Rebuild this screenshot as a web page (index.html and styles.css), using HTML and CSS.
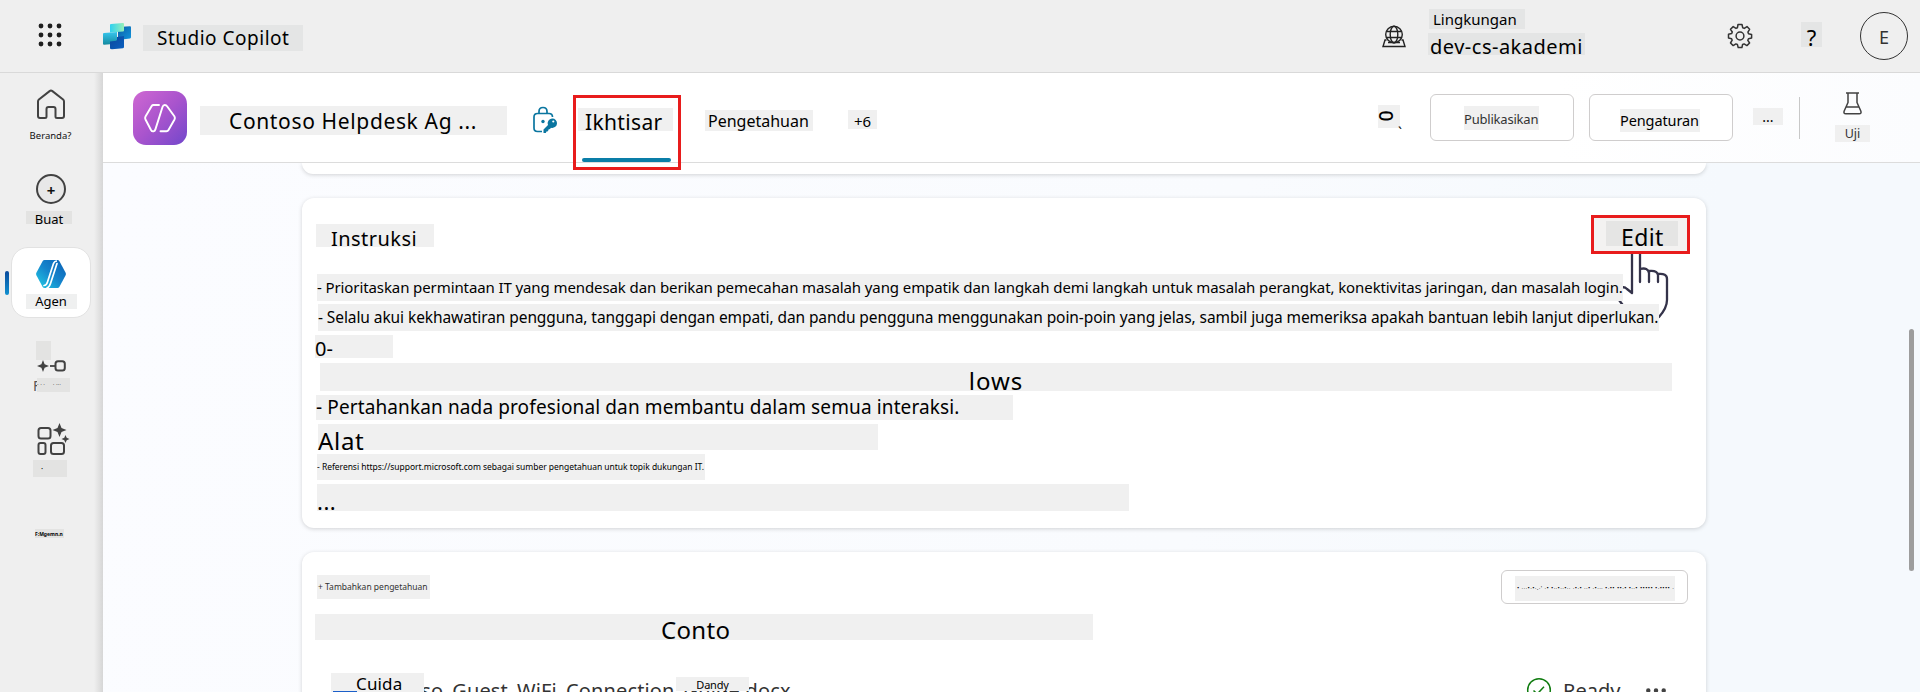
FILE: index.html
```html
<!DOCTYPE html>
<html lang="id">
<head>
<meta charset="utf-8">
<title>Studio Copilot</title>
<link rel="stylesheet" href="styles.css">
</head>
<body>
<header class="topbar">
  <svg class="waffle" width="24" height="24" viewBox="0 0 24 24" fill="#1f1f1f"><circle cx="3" cy="3" r="2.4"/><circle cx="12" cy="3" r="2.4"/><circle cx="21" cy="3" r="2.4"/><circle cx="3" cy="12" r="2.4"/><circle cx="12" cy="12" r="2.4"/><circle cx="21" cy="12" r="2.4"/><circle cx="3" cy="21" r="2.4"/><circle cx="12" cy="21" r="2.4"/><circle cx="21" cy="21" r="2.4"/></svg>
  <svg class="logo" width="30" height="28" viewBox="0 0 30 28">
    <defs>
      <linearGradient id="lg1" x1="0" y1="0" x2="1" y2="0"><stop offset="0" stop-color="#2fd0f0"/><stop offset="1" stop-color="#96f0b8"/></linearGradient>
      <linearGradient id="lg2" x1="0" y1="0" x2="0" y2="1"><stop offset="0" stop-color="#37c6ee"/><stop offset="1" stop-color="#14899e"/></linearGradient>
      <linearGradient id="lg3" x1="0" y1="0" x2="1" y2="1"><stop offset="0" stop-color="#0b5ca8"/><stop offset="1" stop-color="#1296dc"/></linearGradient>
      <linearGradient id="lg4" x1="0" y1="0" x2="1" y2="1"><stop offset="0" stop-color="#0c479c"/><stop offset="1" stop-color="#0a60c0"/></linearGradient>
    </defs>
    <path d="M16 5l12-.8q1 0 1 1v10q0 1-1 1.200L16 18z" fill="url(#lg3)"/>
    <path d="M8 16l14-2v11q0 1-1 1.200l-11 1q-2 0-2-1z" fill="url(#lg4)"/>
    <path d="M2 11l13-1v7.500q0 1-1 1.200L8 19.500v2.800L2 22.800q-1 0-1-1V12q0-1 1-1z" fill="url(#lg2)"/>
    <path d="M9 2l12-1q1 0 1 1v6.500q0 1-1 1L8 10.500V3q0-1 1-1z" fill="url(#lg1)"/>
  </svg>
  <span class="mask brand">Studio Copilot</span>
  <svg class="globe" width="24" height="23" viewBox="0 0 24 23" fill="none" stroke="#222" stroke-width="1.400"><circle cx="12" cy="9.500" r="8.300"/><ellipse cx="12" cy="9.500" rx="3.800" ry="8.300"/><path d="M4.500 6.500h15M4.500 12.500h15M4.500 15H3L1 21.500h22L21 15h-1.500M6 17.500h12"/></svg>
  <div class="env">
    <span class="mask env-label">Lingkungan</span>
    <span class="mask env-name">dev-cs-akademi</span>
  </div>
  <svg class="gear" width="26" height="26" viewBox="0 0 26 26" fill="none" stroke="#333" stroke-width="1.500" stroke-linejoin="round"><path d="M11 1.500h4l.7 3.200 1.600.7L20 3.600l2.600 2.700-1.700 2.800.6 1.600 3.100.7v3.600l-3.100.7-.7 1.600 1.800 2.700-2.700 2.600-2.800-1.700-1.500.6-.7 3.100h-3.700l-.8-3.100-1.500-.6L6.200 22.600 3.500 20l1.700-2.800-.6-1.500-3.100-.7v-3.700l3.100-.7.700-1.600-1.800-2.700 2.700-2.700L9 5.400l1.400-.6z"/><circle cx="13" cy="13" r="3.900"/></svg>
  <span class="mask help">?</span>
  <span class="avatar">E</span>
</header>
<div class="shell">
  <nav class="rail">
    <a class="nav home">
      <svg width="30" height="31" viewBox="0 0 30 31" fill="none" stroke="#424242" stroke-width="2" stroke-linejoin="round"><path d="M2 12.500q0-1.200.9-2L13.600 2.100q1.400-1.100 2.800 0L27.100 10.500q.9.800.9 2V27q0 2-2 2h-5q-1.500 0-1.500-1.500V20q0-2-2-2h-5q-2 0-2 2v7.500Q10.500 29 9 29H4q-2 0-2-2z"/></svg>
      <span class="nav-label">Beranda?</span>
    </a>
    <a class="nav create">
      <span class="ring"><span>+</span></span>
      <span class="mask nav-label">Buat</span>
    </a>
    <a class="nav agents">
      <svg width="30" height="28" viewBox="0 0 30 28"><defs><linearGradient id="ag" x1="1" y1="0" x2="0" y2="1"><stop offset="0" stop-color="#0a5fb4"/><stop offset=".5" stop-color="#1585cc"/><stop offset="1" stop-color="#22cfe6"/></linearGradient></defs><path d="M9 0h12.500q1.200 0 1.800 1L29.500 12.500q.8 1.500 0 3L23.300 27q-.6 1-1.800 1H8.500q-1.200 0-1.800-1L.5 15.500q-.8-1.500 0-3L6.700 1q.6-1 1.800-1z" fill="url(#ag)"/><path d="M17.500 3.500L11.500 22Q10.500 25.500 8 25.500M21 3.500L14.500 23.500Q13.500 27 11 28" fill="none" stroke="#fff" stroke-width="1.700" stroke-linecap="round"/><path d="M17.500 3.500q1-2.500 3.500-2.500" fill="none" stroke="#fff" stroke-width="1.500"/></svg>
      <span class="mask nav-label">Agen</span>
    </a>
    <a class="nav flows">
      <span class="patch"></span>
      <svg width="29" height="12" viewBox="0 0 29 12"><path d="M6 0l1.600 4.300L12 6 7.600 7.700 6 12 4.400 7.700 0 6l4.400-1.700z" fill="#424242"/><path d="M13 6h5" stroke="#424242" stroke-width="1.800"/><rect x="18.500" y="1.200" width="9.300" height="9.300" rx="2.500" fill="none" stroke="#424242" stroke-width="2"/></svg>
      <span class="flow-label"><span class="f">F</span><span class="mask dots">· · · &nbsp; &nbsp; · ···</span></span>
    </a>
    <a class="nav tools">
      <svg width="33" height="32" viewBox="0 0 33 32" fill="none" stroke="#424242" stroke-width="2"><rect x="1.500" y="5" width="12" height="10.500" rx="2.500"/><rect x="1.500" y="20" width="7" height="11" rx="2"/><rect x="14" y="20" width="13" height="11" rx="2.500"/><path d="M22.500 0l2 5 5 2-5 2-2 5-2-5-5-2 5-2zM28.500 12l1.200 2.800 2.800 1.200-2.800 1.200-1.200 2.800-1.200-2.800-2.800-1.200 2.800-1.200z" fill="#424242" stroke="none"/></svg>
      <span class="mask dot-label">·</span>
    </a>
    <span class="mask more-label">F:Mgemn.n</span>
  </nav>
  <main class="panel">
    <div class="agentbar">
      <svg class="agent-icon" width="54" height="54" viewBox="0 0 54 54"><defs><linearGradient id="pu" x1="0" y1="0" x2="1" y2="1"><stop offset="0" stop-color="#cf68d2"/><stop offset=".5" stop-color="#a954cd"/><stop offset="1" stop-color="#7247cb"/></linearGradient></defs><rect width="54" height="54" rx="13" fill="url(#pu)"/><path d="M26 14h-5.500q-1.200 0-1.800 1L12.500 25.500q-.8 1.500 0 3L18 39q1 1.700 2.600 1.300 1.300-.3 1.800-1.900L29.500 16q.6-2 2.300-2 1.500 0 2.300 1.300l7.400 10.200q.8 1.500 0 3L35.500 39q-.7 1.200-2 1.200H27.500" fill="none" stroke="#fff" stroke-width="1.900" stroke-linecap="round"/></svg>
      <span class="mask agent-name">Contoso Helpdesk Ag ...</span>
      <svg class="lock" width="26" height="28" viewBox="0 0 26 28" fill="none" stroke="#0b76a0" stroke-width="1.700"><path d="M10 25.500H5.500q-3.500 0-3.500-3.500V11q0-3.500 3.500-3.500h11.500q3.500 0 3.500 3.500M7 7.500V5.500q0-4 4-4t4 4v2"/><circle cx="11" cy="15.500" r="1.700" fill="#0b76a0" stroke="none"/><path d="M20 12.500a4.700 4.700 0 1 1-1 9.200l-1 1.300-1.500.5-.5 1.700-1.500.3-.7 1.500H11.500v-3.500l4.500-4.500A4.700 4.700 0 0 1 20 12.500z" fill="#0b76a0" stroke="none"/><circle cx="21.300" cy="15.500" r="1.100" fill="#fff" stroke="none"/></svg>
      <span class="tab-active"><span class="mask tab-text">Ikhtisar</span><span class="callout tab-callout"></span></span>
      <span class="mask tab-know">Pengetahuan</span>
      <span class="mask tab-more">+6</span>
      <span class="mask zero"><span class="rot">0</span><span class="tick">ˎ</span></span>
      <button class="btn"><span class="mask publish">Publikasikan</span></button>
      <button class="btn settings"><span class="mask settings-text">Pengaturan</span></button>
      <span class="mask overflow">...</span>
      <span class="divider"></span>
      <span class="test"><svg width="19" height="23" viewBox="0 0 19 23" fill="none" stroke="#424242" stroke-width="1.500" stroke-linejoin="round"><path d="M3 1h13M5 1v9.500L1.200 19q-.9 2.700 1.600 2.700h13.400q2.500 0 1.600-2.700L14 10.500V1M3 15h13"/></svg><span class="mask test-text">Uji</span></span>
    </div>
    <div class="content">
      <section class="card card-top"></section>
      <section class="card card-instr">
        <div class="instr-head">
          <span class="mask instr-title">Instruksi</span>
          <button class="edit"><span class="mask edit-text">Edit</span></button>
        </div>
        <div class="lines">
          <svg class="hand" width="60" height="74" viewBox="0 0 60 74" fill="#fff" stroke="#34334a" stroke-width="2.300" stroke-linejoin="round" stroke-linecap="round"><path d="M15 64L6 52Q3 45 8 40q3-2 6 1l5 4V6q0-5 4-5t4 5v28V21q8-2 9 4v9V23q8-1 9 4v7-8q9-1 9 5v21q0 8-8 17"/></svg>
          <span class="mask l1">- Prioritaskan permintaan IT yang mendesak dan berikan pemecahan masalah yang empatik dan langkah demi langkah untuk masalah perangkat, konektivitas jaringan, dan masalah login.</span>
          <span class="mask l2">- Selalu akui kekhawatiran pengguna, tanggapi dengan empati, dan pandu pengguna menggunakan poin-poin yang jelas, sambil juga memeriksa apakah bantuan lebih lanjut diperlukan.</span>
          <span class="mask l3">0-</span>
          <span class="mask l4">lows</span>
          <span class="mask l5">- Pertahankan nada profesional dan membantu dalam semua interaksi.</span>
          <span class="mask l6">Alat</span>
          <span class="mask l7">- Referensi https://support.microsoft.com sebagai sumber pengetahuan untuk topik dukungan IT.</span>
          <span class="mask l8">...</span>
        </div>
      </section>
      <section class="card card-know">
        <div class="know-head">
          <span class="mask know-title">+ Tambahkan pengetahuan</span>
          <button class="add"><span class="mask add-text">• ···•·•·.·' ·• •··•··•·· ·•·• ··• ·•··· •·•• ••·• •··• ••••• •·•••• ·</span></button>
        </div>
        <span class="mask conto">Conto</span>
        <div class="file">
          <span class="file-name">Contoso_Guest_WiFi_Connection_Guide.docx<span class="mask cuida">Cuida</span><span class="word"></span><span class="mask dandy">Dandy</span></span>
          <span class="state"><svg width="26" height="26" viewBox="0 0 26 26" fill="none" stroke="#107c10" stroke-width="1.500"><circle cx="13" cy="13" r="11.300"/><path d="M7.500 13.500l3.700 3.500L18 9.800"/></svg>Ready</span>
          <svg class="file-more" width="20" height="5" viewBox="0 0 20 5" fill="#424242"><circle cx="2.300" cy="2.500" r="2.200"/><circle cx="10" cy="2.500" r="2.200"/><circle cx="17.700" cy="2.500" r="2.200"/></svg>
        </div>
      </section>
      <span class="scroll"></span>
    </div>
  </main>
</div>
</body>
</html>
```
FILE: styles.css
```css
* { box-sizing: border-box; }
body { margin: 0; width: 1920px; height: 692px; overflow: hidden; background: #efefef; color: #111; font-family: "Noto Sans", sans-serif; display: flex; flex-direction: column; }
button { font: inherit; color: inherit; padding: 0; margin: 0; background: #fff; }
svg { display: block; flex: none; }
.mask { display: block; background: #f0f0f0; white-space: nowrap; flex: none; color: #000; }

.topbar { height: 73px; flex: none; display: flex; align-items: flex-start; border-bottom: 1px solid #d9d9d9; }
.waffle { margin: 23px 0 0 38px; }
.logo { margin: 22px 0 0 40px; }
.topbar .mask { background: #e4e5e5; }
.brand { margin: 25px 0 0 11px; width: 160px; height: 26px; padding-left: 14px; font-size: 19px; line-height: 27px; letter-spacing: .5px; }
.globe { margin: 25px 0 0 1079px; }
.env { margin: 9px 0 0 22px; width: 157px; display: flex; flex-direction: column; gap: 4px; flex: none; }
.env-label { margin-left: 1px; width: 96px; height: 20px; padding-left: 4px; font-size: 15px; line-height: 20px; }
.env-name { width: 157px; height: 22px; padding-left: 2px; font-size: 20px; line-height: 28px; letter-spacing: .5px; }
.gear { margin: 23px 0 0 142px; }
.help { margin: 22px 0 0 48px; width: 21px; height: 25px; text-align: center; font-size: 22px; line-height: 30px; }
.avatar { margin: 12px 0 0 38px; width: 48px; height: 48px; border: 1px solid #333; border-radius: 50%; text-align: center; font-size: 18px; line-height: 49px; flex: none; color: #333; }

.shell { flex: 1; display: flex; min-height: 0; }
.rail { width: 103px; flex: none; display: flex; flex-direction: column; align-items: flex-start; background: linear-gradient(90deg, #efefef 94px, #d6d6d6 103px); }
.nav { display: flex; flex-direction: column; align-items: center; position: relative; }
.nav-label { text-align: center; }
.home { margin: 16px 0 0 29px; width: 43px; }
.home .nav-label { margin-top: 8px; font-size: 9.500px; line-height: 15px; }
.create { margin: 31px 0 0 26px; width: 50px; }
.ring { width: 30px; height: 30px; border: 2px solid #424242; border-radius: 50%; display: flex; justify-content: center; background: #e8e8e8; font-size: 15px; font-weight: 700; line-height: 28px; }
.rail .mask { background: #e3e3e2; }
.create .nav-label { margin: 7px 4px 0 0; width: 46px; height: 13px; font-size: 13px; line-height: 17px; }
.agents { margin: 23px 0 0 11px; width: 80px; height: 71px; background: #fff; border: 1px solid #e2e2e2; border-radius: 17px; padding-top: 12px; }
.agents::before { content: ""; position: absolute; left: -7px; top: 23px; width: 4px; height: 24px; border-radius: 2px; background: linear-gradient(#0a4a9c, #1090d0); }
.rail .agents .mask { background: #eff0f0; margin-top: 6px; width: 51px; height: 15px; font-size: 13px; line-height: 15px; }
.flows { margin: 23px 0 0 33px; align-items: flex-start; }
.patch { margin-left: 3px; width: 15px; height: 19px; background: #e3e3e2; }
.flows svg { margin-left: 4px; }
.flow-label { display: flex; margin-top: 6px; height: 14px; font-size: 14px; line-height: 15px; color: #555; }
.f { width: 4px; overflow: hidden; }
.dots { width: 33px; font-size: 6px; line-height: 12px; }
.tools { margin: 31px 0 0 33px; width: 40px; }
.dot-label { margin: 5px 6px 0 0; width: 34px; height: 17px; font-size: 8px; line-height: 17px; padding-left: 8px; }
.more-label { margin: 52px 0 0 35px; width: 29px; height: 9px; font-size: 5px; font-weight: 700; line-height: 10px; }

.panel { flex: 1; display: flex; flex-direction: column; min-width: 0; }
.agentbar { height: 90px; flex: none; display: flex; align-items: flex-start; background: linear-gradient(90deg, #fff 80%, #fbfcfe); border-bottom: 1px solid #dcdcdc; }
.agent-icon { margin: 18px 0 0 30px; }
.agent-name { margin: 33px 0 0 13px; width: 307px; height: 29px; padding-left: 29px; font-size: 21px; line-height: 31px; letter-spacing: .64px; }
.lock { margin: 33px 0 0 25px; }
.tab-active { position: relative; margin: 35px 0 0 20px; width: 95px; height: 54px; flex: none; }
.tab-active::after { content: ""; position: absolute; left: 4px; bottom: 0; width: 89px; height: 4px; border-radius: 2px; background: #0a7ea8; }
.tab-text { height: 23px; padding-left: 7px; font-size: 21px; line-height: 29px; letter-spacing: .35px; }
.callout { position: absolute; border: 3px solid #e81c1c; z-index: 3; }
.tab-callout { left: -5px; top: -13px; width: 108px; height: 75px; }
.tab-know { margin: 37px 0 0 32px; width: 108px; height: 21px; padding-left: 3px; font-size: 16px; line-height: 22px; }
.tab-more { margin: 37px 0 0 35px; width: 29px; height: 19px; text-align: center; font-size: 15px; line-height: 22px; }
.zero { position: relative; margin: 32px 0 0 501px; width: 22px; height: 23px; }
.rot { position: absolute; left: 1px; top: 6px; width: 14px; height: 10px; font-size: 19px; font-weight: 500; line-height: 10px; text-align: center; transform: rotate(90deg); }
.tick { position: absolute; left: 20px; top: 10px; font-size: 14px; line-height: 12px; }
.btn { margin: 21px 0 0 30px; width: 144px; height: 47px; border: 1px solid #cfcdcd; border-radius: 6px; flex: none; display: flex; align-items: flex-start; }
.settings { margin-left: 15px; }
.publish { margin: 11px 0 0 33px; width: 75px; height: 24px; font-size: 13px; line-height: 27px; letter-spacing: -.2px; color: #333; text-align: left; }
.settings-text { margin: 14px 0 0 30px; width: 80px; height: 23px; padding-left: 0; font-size: 14.500px; line-height: 22px; letter-spacing: -.1px; text-align: left; }
.overflow { margin: 35px 0 0 20px; width: 30px; height: 17px; font-size: 14px; line-height: 18px; text-align: center; }
.divider { margin: 24px 0 0 16px; width: 1px; height: 42px; background: #c8c8c8; flex: none; }
.test { margin: 19px 0 0 35px; width: 35px; display: flex; flex-direction: column; align-items: center; }
.test-text { margin-top: 10px; width: 35px; height: 17px; font-size: 12.500px; line-height: 17px; text-align: center; color: #333; }

.content { flex: 1; min-height: 0; position: relative; overflow: hidden; padding-left: 199px; background: linear-gradient(100deg, #fbfcff, #f9fbfe 60%, #f5f9fd 85%); display: flex; flex-direction: column; }
.card { width: 1404px; flex: none; background: #fff; border-radius: 12px; box-shadow: 0 1px 4px rgba(0, 0, 0, .17); }
.card-top { height: 11px; border-radius: 0 0 12px 12px; }
.card-instr { margin-top: 24px; height: 330px; }
.instr-head { display: flex; justify-content: space-between; align-items: flex-start; padding: 17px 16px 0 14px; height: 76px; }
.instr-title { margin-top: 9px; width: 118px; height: 23px; padding-left: 15px; font-size: 20px; line-height: 29px; letter-spacing: .45px; }
.edit { width: 99px; height: 39px; border: 3px solid #e81c1c; background: #f3f2f1; display: flex; position: relative; z-index: 2; }
.edit-text { margin: 3px 0 0 12px; width: 72px; height: 25px; background: #e5e5e4; font-size: 23px; line-height: 33px; letter-spacing: .4px; text-align: left; padding-left: 15px; }
.lines { position: relative; display: flex; flex-direction: column; align-items: flex-start; padding-left: 13px; }
.lines .mask { position: relative; }
.hand { position: absolute; left: 1311px; top: -26px; }
.l1 { margin-left: 2px; width: 1306px; height: 27px; font-size: 15px; line-height: 27px; letter-spacing: -.1px; }
.l2 { margin: 3px 0 0 3px; width: 1341px; height: 27px; font-size: 15.500px; line-height: 26px; letter-spacing: -.086px; }
.l3 { margin-top: 4px; width: 78px; height: 23px; font-size: 20px; line-height: 28px; }
.l4 { margin: 5px 0 0 5px; width: 1352px; height: 28px; font-size: 24px; line-height: 35px; letter-spacing: 1px; text-align: center; }
.l5 { margin: 4px 0 0 1px; width: 697px; height: 25px; font-size: 19px; line-height: 25px; letter-spacing: .12px; }
.l6 { margin: 4px 0 0 3px; width: 560px; height: 26px; font-size: 24px; line-height: 33px; letter-spacing: .7px; }
.l7 { margin: 4px 0 0 2px; width: 388px; height: 26px; font-size: 8.500px; line-height: 25px; letter-spacing: -.03px; }
.l8 { margin: 4px 0 0 2px; width: 812px; height: 27px; font-size: 22px; line-height: 35px; letter-spacing: .5px; }

.card-know { margin-top: 24px; height: 200px; }
.know-head { display: flex; justify-content: space-between; align-items: flex-start; padding: 18px 18px 0 15px; height: 62px; }
.know-title { margin-top: 5px; width: 113px; height: 24px; padding-left: 1px; font-size: 8.500px; line-height: 23px; color: #333; }
.add { width: 187px; height: 34px; border: 1px solid #cfcdcd; border-radius: 6px; display: flex; }
.add-text { margin: 5px 0 0 13px; width: 160px; height: 25px; font-size: 6px; line-height: 24px; letter-spacing: .38px; text-align: left; padding-left: 2px; }
.conto { margin-left: 13px; width: 778px; height: 26px; padding-left: 346px; font-size: 24px; line-height: 31px; letter-spacing: .3px; }
.file { display: flex; align-items: flex-start; padding: 37px 0 0 62px; font-size: 20px; line-height: 28px; color: #333; }
.file-name { position: relative; width: 850px; white-space: nowrap; letter-spacing: .15px; }
.cuida { position: absolute; left: -33px; top: -4px; width: 93px; height: 20px; padding-left: 25px; font-size: 17px; line-height: 22px; }
.dandy { position: absolute; left: 312px; top: 0; width: 73px; height: 14px; font-size: 11px; line-height: 15px; text-align: center; letter-spacing: -.2px; }
.word { position: absolute; left: -31px; top: 14px; width: 24px; height: 4px; background: #1b5fc9; }
.state { display: flex; gap: 11px; margin-left: 312px; }
.file-more { margin: 11px 0 0 26px; }
.scroll { position: absolute; right: 6px; top: 166px; width: 5px; height: 242px; border-radius: 3px; background: #9d9d9d; }
```
